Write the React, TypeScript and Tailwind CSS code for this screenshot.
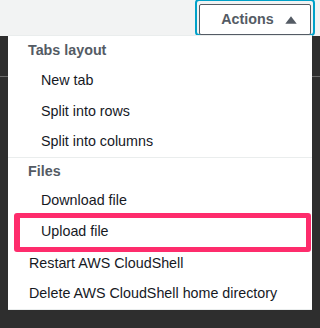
import React from "react";

const font = { fontFamily: '"Liberation Sans", Arial, sans-serif' };

function Item({ children, indent = true, h = "h-[31px]" }: { children: React.ReactNode; indent?: boolean; h?: string }) {
  return (
    <div className={`${h} flex items-center ${indent ? "pl-[33px]" : "pl-[21px]"} text-[14.3px] text-[#16191f]`}>
      {children}
    </div>
  );
}

export default function App() {
  return (
    <div className="relative w-[320px] h-[328px] bg-[#2e2e2e] overflow-hidden" style={font}>
      <div className="h-[36px] bg-[#f2f3f3] flex justify-end pr-[5px]">
        <div className="w-[120px] h-[37px] mt-[-1px] rounded-[4px] border-2 border-[#00a1c9] p-[2px] pt-[3px]">
          <div className="h-[31px] rounded-[2px] border border-[#545b64] bg-white flex items-center justify-center gap-[11px] pl-[8px]">
            <span className="text-[14.3px] font-bold text-[#545b64]">Actions</span>
            <svg width="12" height="8" viewBox="0 0 12 8">
              <polygon points="6,0.3 11.7,7.7 0.3,7.7" fill="#545b64" />
            </svg>
          </div>
        </div>
      </div>
      <div className="mt-[40px] h-px bg-[#6b6b6b]" />

      <div className="absolute left-[8px] top-[35px] w-[304px] bg-white border-t border-b border-[#eaeded]">
        <div className="h-[29px] flex items-center pl-[20px] text-[14.3px] font-bold text-[#545b64]">Tabs layout</div>
        <Item>New tab</Item>
        <Item>Split into rows</Item>
        <Item h="h-[30px]">Split into columns</Item>
        <div className="h-px bg-[#eaeded]" />
        <div className="h-[28px] flex items-center pl-[20px] text-[14.3px] font-bold text-[#545b64]">Files</div>
        <Item h="h-[30px]">Download file</Item>
        <div className="relative">
          <Item h="h-[32px]">Upload file</Item>
          <div className="absolute left-[6px] right-[1px] top-[-3px] bottom-[-4px] border-[5px] border-l-[6px] border-[#fe2c6c] rounded-[3px]" />
        </div>
        <Item indent={false}>Restart AWS CloudShell</Item>
        <Item indent={false} h="h-[30px]">Delete AWS CloudShell home directory</Item>
      </div>
    </div>
  );
}
